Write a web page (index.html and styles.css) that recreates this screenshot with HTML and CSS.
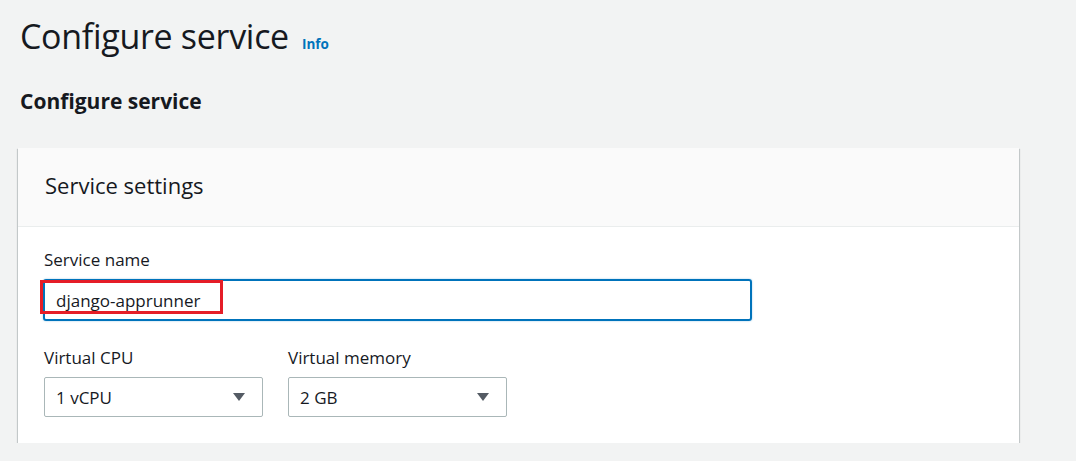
FILE: index.html
```html
<!DOCTYPE html>
<html>
<head>
<meta charset="utf-8">
<link rel="stylesheet" href="styles.css">
</head>
<body>
<div class="page">
  <div class="title-row">
    <h1 class="title">Configure service</h1>
    <a class="info">Info</a>
  </div>
  <h2 class="subtitle">Configure service</h2>
  <div class="card">
    <div class="card-header">Service settings</div>
    <div class="card-body">
      <div class="field">
        <div class="label">Service name</div>
        <div class="input-wrap">
          <div class="input">django-apprunner</div>
          <div class="highlight"></div>
        </div>
      </div>
      <div class="row">
        <div class="field">
          <div class="label">Virtual CPU</div>
          <div class="select"><span>1 vCPU</span><svg class="caret" width="12" height="8" viewBox="0 0 12 8"><path d="M0 0h12L6 8z" fill="#545b64"/></svg></div>
        </div>
        <div class="field">
          <div class="label">Virtual memory</div>
          <div class="select"><span>2 GB</span><svg class="caret" width="12" height="8" viewBox="0 0 12 8"><path d="M0 0h12L6 8z" fill="#545b64"/></svg></div>
        </div>
      </div>
    </div>
  </div>
</div>
</body>
</html>
```
FILE: styles.css
```css
html, body {
  margin: 0;
  padding: 0;
  background: #f2f3f3;
  font-family: "Open Sans", "Noto Sans", sans-serif;
  color: #16191f;
}
.page {
  padding: 12px 0 0 18px;
  width: 1001px;
}
.title-row {
  display: flex;
  align-items: baseline;
  padding-left: 2px;
  gap: 13px;
}
.title {
  margin: 0;
  font-size: 34px;
  font-weight: 400;
  line-height: 48px;
  letter-spacing: -0.3px;
}
.info {
  color: #0073bb;
  font-size: 13.5px;
  font-weight: 700;
}
.subtitle {
  margin: 27px 0 0 2px;
  font-size: 21px;
  font-weight: 700;
  line-height: 28px;
}
.card {
  margin-top: 33px;
  background: #fff;
  box-shadow: 0 1px 1px 0 rgba(0,28,36,.3), 1px 1px 1px 0 rgba(0,28,36,.15), -1px 1px 1px 0 rgba(0,28,36,.15);
}
.card-header {
  background: #fafafa;
  border-bottom: 1px solid #eaeded;
  height: 79px;
  box-sizing: border-box;
  padding: 22px 27px 0;
  font-size: 22px;
  line-height: 30px;
}
.card-body {
  padding: 21px 26px 26px;
  display: flex;
  flex-direction: column;
  gap: 25px;
}
.label {
  font-size: 17px;
  line-height: 24px;
  margin-bottom: 7px;
}
.input-wrap {
  position: relative;
  width: 708px;
}
.input {
  height: 42px;
  box-sizing: border-box;
  border: 2px solid #0073bb;
  border-radius: 3px;
  box-shadow: 0 0 2px #99c7e4;
  padding: 7px 11px;
  font-size: 17px;
  line-height: 26px;
  margin-left: -1px;
}
.highlight {
  position: absolute;
  left: -4px;
  top: 1px;
  width: 183px;
  height: 34px;
  box-sizing: border-box;
  border: 3px solid #e51d27;
}
.row {
  display: flex;
  gap: 25px;
}
.select {
  width: 219px;
  height: 40px;
  box-sizing: border-box;
  border: 1px solid #aab7b8;
  border-radius: 2px;
  display: flex;
  align-items: center;
  justify-content: space-between;
  padding: 0 17px 0 11px;
  font-size: 17px;
}
.caret {
  display: block;
}
```
